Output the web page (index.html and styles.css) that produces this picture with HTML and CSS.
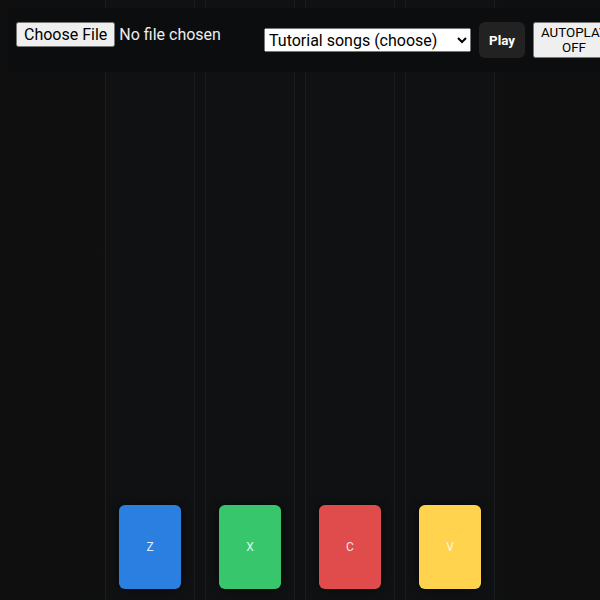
FILE: index.html
```
<!DOCTYPE html>
<html lang="en">
<head>
    <meta charset="UTF-8">
    <meta name="viewport" content="width=device-width, initial-scale=1.0">
    <title>Rhythm Game</title>
    <link rel="stylesheet" href="styles.css">
</head>
<body>
    <!-- Lanes -->
    <main class="stage">
        <div class="lane"><button class="key blue">Z</button></div>
        <div class="lane"><button class="key green">X</button></div>
        <div class="lane"><button class="key red">C</button></div>
        <div class="lane"><button class="key yellow">V</button></div>
    </main>
    <!-- Controls over the lanes -->
    <div class="toolbar">
        <input type="file" class="file-input" aria-label="Song file">
        <select class="song-select" aria-label="Tutorial songs">
            <option>Tutorial songs (choose)</option>
        </select>
        <button class="play-button">Play</button>
        <button class="autoplay-button">AUTOPLAY OFF</button>
    </div>
</body>
</html>
```

FILE: styles.css
```
* {
    box-sizing: border-box;
}
body {
    margin: 0;
    height: 100vh;
    overflow: hidden;
    background: #0f0f0f;
    color: #eee;
    font-family: Roboto, sans-serif;
}
/* Lanes */
.stage {
    height: 100%;
    display: flex;
    justify-content: center;
    gap: 10px;
    background: linear-gradient(90deg, #0f0f0f, #0f1011 30%, #0f1011 70%, #0f0f0f);
}
.lane {
    width: 90px;
    display: flex;
    justify-content: center;
    align-items: flex-end;
    padding-bottom: 11px;
    border: solid #1a1d1f;
    border-width: 0 1px;
    background: #0f1113;
}
.key {
    width: 62px;
    height: 84px;
    padding: 0;
    border: none;
    border-radius: 6px;
    box-shadow: 0 0 10px rgba(0, 0, 0, 0.6);
    color: rgba(255, 255, 255, 0.85);
    font-family: inherit;
    font-size: 12px;
}
.blue {
    background: #2b7fe0;
}
.green {
    background: #37c66b;
}
.red {
    background: #e04b4b;
}
.yellow {
    background: #ffd34d;
}
/* Controls */
.toolbar {
    position: absolute;
    top: 8px;
    left: 8px;
    display: flex;
    align-items: center;
    gap: 8px;
    padding: 14px 8px;
    border-radius: 8px;
    background: rgba(12, 13, 14, 0.9);
    width: max-content;
}
.toolbar > * {
    flex: none;
    font-family: inherit;
}
.file-input {
    align-self: stretch;
    width: 240px;
    font-size: 16px;
}
.file-input::file-selector-button {
    height: 25px;
    font-family: inherit;
}
.song-select {
    width: 207px;
    height: 24px;
    font-size: 16px;
}
.play-button {
    width: 46px;
    height: 36px;
    padding: 0;
    border: none;
    border-radius: 6px;
    background: #222;
    color: #fff;
    font-weight: bold;
}
.autoplay-button {
    width: 82px;
    height: 36px;
    line-height: 15px;
}
```
